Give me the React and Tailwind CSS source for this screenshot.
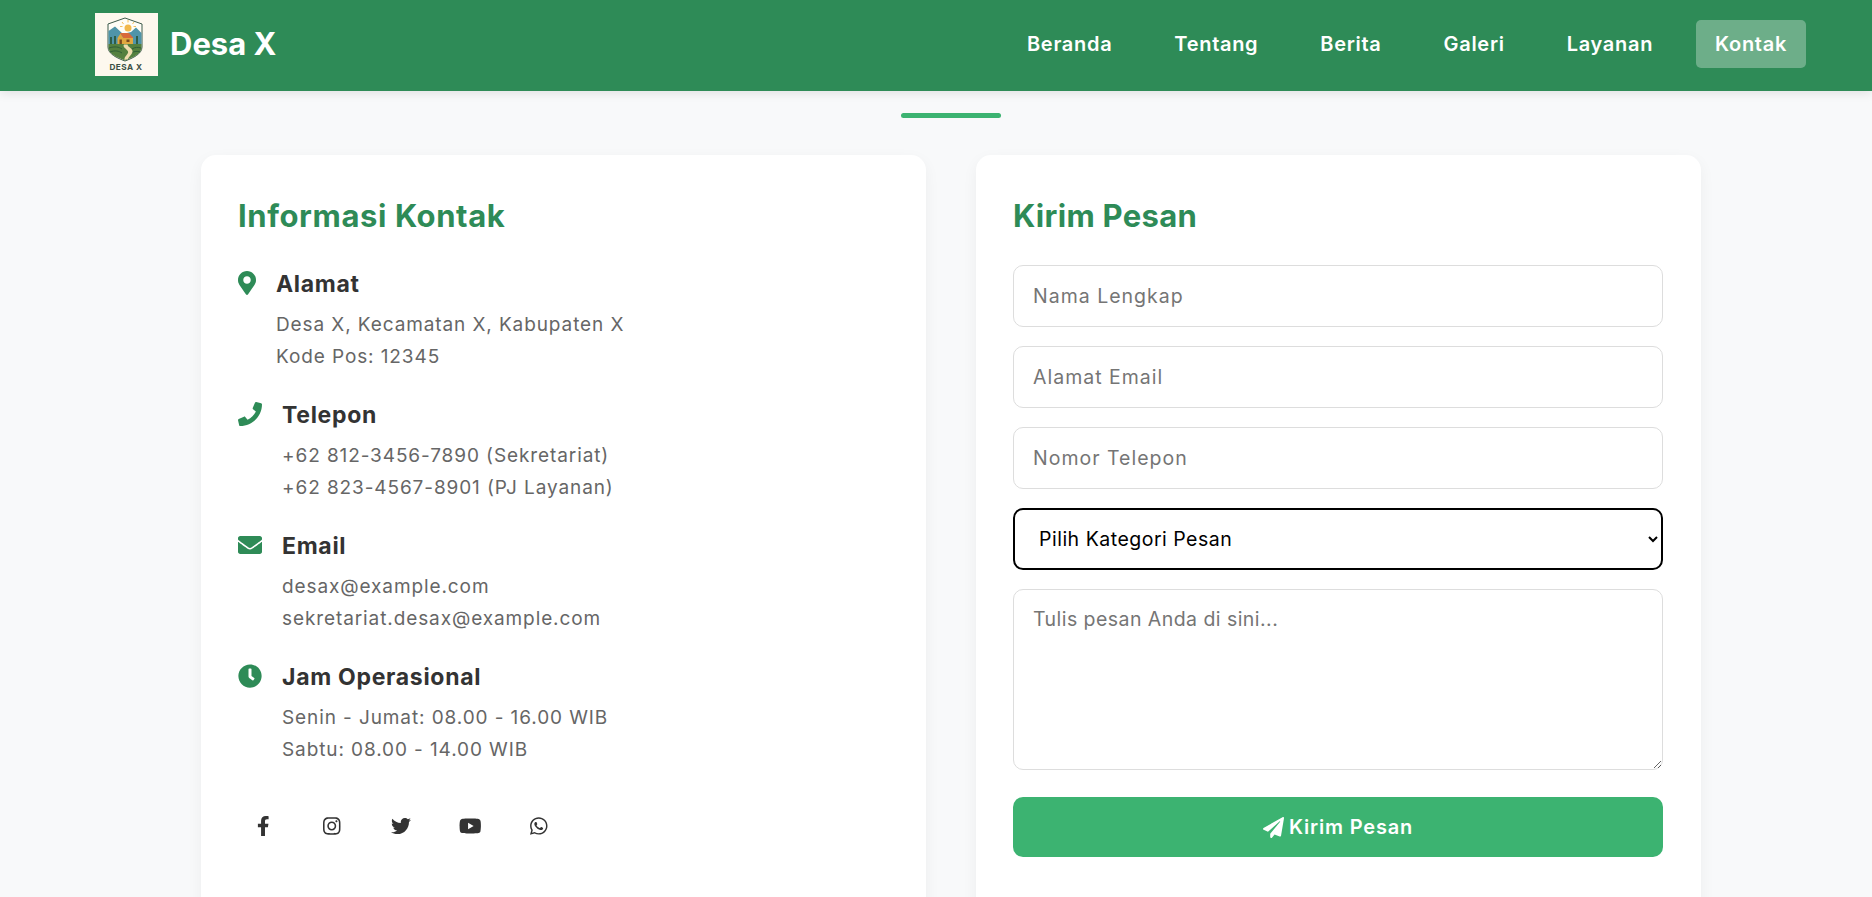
import { FaMapMarkerAlt, FaPhone, FaEnvelope, FaClock, FaFacebookF, FaInstagram, FaTwitter, FaYoutube, FaWhatsapp, FaPaperPlane } from "react-icons/fa";

const navItems = ["Beranda", "Tentang", "Berita", "Galeri", "Layanan", "Kontak"];

const contactItems = [
  { icon: FaMapMarkerAlt, iconClass: "w-[18px]", title: "Alamat", lines: ["Desa X, Kecamatan X, Kabupaten X", "Kode Pos: 12345"] },
  { icon: FaPhone, iconClass: "w-[24px]", title: "Telepon", lines: ["+62 812-3456-7890 (Sekretariat)", "+62 823-4567-8901 (PJ Layanan)"] },
  { icon: FaEnvelope, iconClass: "w-[24px]", title: "Email", lines: ["desax@example.com", "sekretariat.desax@example.com"] },
  { icon: FaClock, iconClass: "w-[24px]", title: "Jam Operasional", lines: ["Senin - Jumat: 08.00 - 16.00 WIB", "Sabtu: 08.00 - 14.00 WIB"] },
];

const socials = [
  { icon: FaFacebookF, size: "w-[12.5px]" },
  { icon: FaInstagram, size: "w-[17.5px]" },
  { icon: FaTwitter, size: "w-[20px]" },
  { icon: FaYoutube, size: "w-[22.5px]" },
  { icon: FaWhatsapp, size: "w-[17.5px]" },
];

const fieldClass =
  "w-full h-[62px] rounded-[10px] border border-[#dddddd] bg-white px-[19px] text-[19.5px] text-black outline-none placeholder:text-[#757575]";

function Logo() {
  return (
    <svg viewBox="0 0 63 63" className="size-[63px] shrink-0">
      <rect width="63" height="63" fill="#fdf8ee" />
      <path d="M13 11 L30 5 L47 11 V34 C47 41 38 45 30 48 C22 45 13 41 13 34 Z" fill="#fffdf6" stroke="#3d5a4a" strokeWidth="1" />
      <circle cx="33" cy="15" r="3.5" fill="#f2b84b" />
      <path d="M33 7 V9.5 M27 9 L28.5 11 M39 9 L37.5 11 M25 13.5 H27.5 M41 13.5 H38.5" stroke="#f2b84b" strokeWidth="0.9" />
      <path d="M13.5 31 V18 L20 13.5 L28 21 L36 19 L41 14.5 L46.5 20 V31 Z" fill="#4f94a8" />
      <path d="M15 31 V24 H17 V31 Z M19 31 V23 H21 V31 Z M41 31 V23 H43 V31 Z" fill="#2f5d46" />
      <path d="M13.5 31 H46.5 V34 C46.5 41 38 44.5 30 47.5 C22 44.5 13.5 41 13.5 34 Z" fill="#54803f" />
      <path d="M14 35 C20 33 24 34 27 36 M15 39 C20 37 24 38 27 40 M37 36 C40 34 43 34 46 35 M36 40 C40 38 42 38 45 39" stroke="#2f5d36" strokeWidth="1" fill="none" />
      <path d="M22.5 31 V25 L25.5 20.5 L28.5 25 H38 V31 Z" fill="#e0a83f" />
      <path d="M25 20 H34 L38.5 25 H28.5 Z" fill="#d9693a" />
      <rect x="24.5" y="26.5" width="2.4" height="4.5" fill="#7b4a1f" />
      <rect x="31.5" y="26.5" width="3" height="2.5" fill="#7b4a1f" />
      <path d="M29 31.5 C27 34 32 36 33 38.5 C34 41 29 43 29.5 47 L33 46 C34 43 38 41 37.5 38 C37 35 32.5 34 32.5 31.5 Z" fill="#efdcae" />
      <text x="31" y="57" textAnchor="middle" fontSize="8.2" fontWeight="700" letterSpacing="0.5" fill="#3a4f44" fontFamily="Inter, sans-serif">DESA X</text>
    </svg>
  );
}

function ContactItem({ icon: Icon, iconClass, title, lines }) {
  return (
    <div className="mb-[25px] flex">
      <Icon className={`mr-[20px] mt-[4px] h-[24px] shrink-0 text-[#2e8b57] ${iconClass}`} />
      <div>
        <h3 className="mb-[8px] text-[23px] leading-[34px] font-bold tracking-[0.7px] text-[#333333]">{title}</h3>
        {lines.map((line) => (
          <p key={line} className="text-[19px] leading-[32px] tracking-[0.9px] text-[#666666]">{line}</p>
        ))}
      </div>
    </div>
  );
}

export default function App() {
  return (
    <div className="h-[897px] overflow-hidden bg-[#f8f9fa] font-['Inter',sans-serif]">
      <header className="relative z-10 flex h-[91px] items-center justify-between bg-[#2e8b57] pb-[3px] pl-[95px] pr-[66px] shadow-[0_2px_10px_rgba(0,0,0,0.1)]">
        <div className="flex items-center gap-[12px]">
          <Logo />
          <span className="text-[31px] font-bold text-white">Desa X</span>
        </div>
        <nav className="flex gap-[24px]">
          {navItems.map((item) => (
            <a key={item} className={`rounded-[5px] px-[19px] py-[8px] text-[20px] leading-[32px] font-semibold tracking-[0.7px] text-white ${item === "Kontak" ? "bg-white/30" : ""}`}>
              {item}
            </a>
          ))}
        </nav>
      </header>

      <main className="pl-[201px]">
        <div className="ml-[700px] mt-[22px] h-[5px] w-[100px] rounded-[3px] bg-[#3cb371]" />
        <div className="mt-[37px] flex w-[1500px] gap-[50px]">
          <section className="h-[800px] w-[725px] rounded-[15px] bg-white pb-[37px] pl-[37px] pr-[38px] pt-[38px] shadow-[0_5px_15px_rgba(0,0,0,0.05)]">
            <h2 className="mb-[28px] text-[31px] leading-[46px] font-bold tracking-[0.6px] text-[#2e8b57]">Informasi Kontak</h2>
            {contactItems.map((item) => (
              <ContactItem key={item.title} {...item} />
            ))}
            <div className="mt-[40px] flex gap-[29px] pl-[5px]">
              {socials.map(({ icon: Icon, size }, i) => (
                <a key={i} className="flex size-[40px] items-center justify-center text-[#333333]">
                  <Icon className={`h-[20px] ${size}`} />
                </a>
              ))}
            </div>
          </section>

          <section className="h-[800px] w-[725px] rounded-[15px] bg-white pb-[37px] pl-[37px] pr-[38px] pt-[38px] shadow-[0_5px_15px_rgba(0,0,0,0.05)]">
            <h2 className="mb-[26px] text-[31px] leading-[46px] font-bold tracking-[0.3px] text-[#2e8b57]">Kirim Pesan</h2>
            <div className="flex flex-col gap-[19px]">
              <input className={`${fieldClass} tracking-[1px]`} placeholder="Nama Lengkap" />
              <input className={`${fieldClass} tracking-[1px]`} placeholder="Alamat Email" />
              <input className={`${fieldClass} tracking-[1px]`} placeholder="Nomor Telepon" />
              <select className="h-[62px] w-full rounded-[10px] border-2 border-black bg-white px-[20px] text-[19.5px] tracking-[0.5px] text-black outline-none">
                <option>Pilih Kategori Pesan</option>
              </select>
              <textarea className={`${fieldClass} h-[181px] resize-y py-[13px] leading-[32px] tracking-[0.45px]`} placeholder="Tulis pesan Anda di sini..." />
            </div>
            <button className="mt-[27px] flex h-[60px] w-full items-center justify-center gap-[5px] rounded-[10px] bg-[#3cb371] text-[20px] font-semibold tracking-[0.8px] text-white">
              <FaPaperPlane className="size-[21px]" />
              Kirim Pesan
            </button>
          </section>
        </div>
      </main>
    </div>
  );
}
